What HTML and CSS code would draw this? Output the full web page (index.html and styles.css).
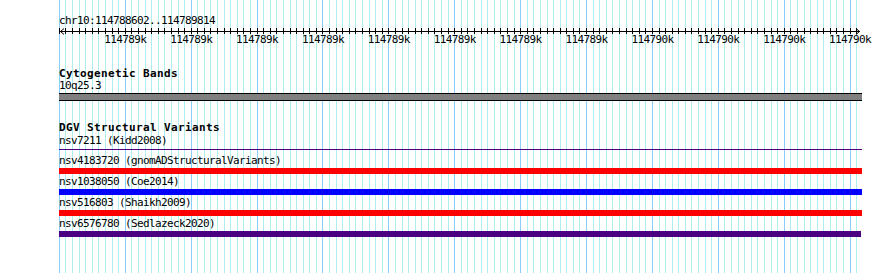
FILE: index.html
```html
<!DOCTYPE html>
<html>
<head>
<meta charset="utf-8">
<link rel="stylesheet" href="styles.css">
</head>
<body>
<div class="panel">
  <div class="ruler">
    <div class="ruler-title">chr10:114788602..114789814</div>
    <svg class="ruler-axis" width="803" height="7" viewBox="0 0 803 7" shape-rendering="crispEdges">
      <path stroke="#000" stroke-width="1" fill="none" d="M0.5 1v6M6.5 1v6M13.5 1v6M20.5 1v6M26.5 1v6M33.5 1v6M39.5 1v6M46.5 1v6M53.5 1v6M59.5 1v6M66.5 1v6M72.5 1v6M79.5 1v6M86.5 1v6M92.5 1v6M99.5 1v6M105.5 1v6M112.5 1v6M119.5 1v6M125.5 1v6M132.5 1v6M138.5 1v6M145.5 1v6M151.5 1v6M158.5 1v6M165.5 1v6M171.5 1v6M178.5 1v6M184.5 1v6M191.5 1v6M198.5 1v6M204.5 1v6M211.5 1v6M217.5 1v6M224.5 1v6M231.5 1v6M237.5 1v6M244.5 1v6M250.5 1v6M257.5 1v6M263.5 1v6M270.5 1v6M277.5 1v6M283.5 1v6M290.5 1v6M296.5 1v6M303.5 1v6M310.5 1v6M316.5 1v6M323.5 1v6M329.5 1v6M336.5 1v6M343.5 1v6M349.5 1v6M356.5 1v6M362.5 1v6M369.5 1v6M375.5 1v6M382.5 1v6M389.5 1v6M395.5 1v6M402.5 1v6M408.5 1v6M415.5 1v6M422.5 1v6M428.5 1v6M435.5 1v6M441.5 1v6M448.5 1v6M455.5 1v6M461.5 1v6M468.5 1v6M474.5 1v6M481.5 1v6M488.5 1v6M494.5 1v6M501.5 1v6M507.5 1v6M514.5 1v6M520.5 1v6M527.5 1v6M534.5 1v6M540.5 1v6M547.5 1v6M553.5 1v6M560.5 1v6M567.5 1v6M573.5 1v6M580.5 1v6M586.5 1v6M593.5 1v6M600.5 1v6M606.5 1v6M613.5 1v6M619.5 1v6M626.5 1v6M632.5 1v6M639.5 1v6M646.5 1v6M652.5 1v6M659.5 1v6M665.5 1v6M672.5 1v6M679.5 1v6M685.5 1v6M692.5 1v6M698.5 1v6M705.5 1v6M712.5 1v6M718.5 1v6M725.5 1v6M731.5 1v6M738.5 1v6M745.5 1v6M751.5 1v6M758.5 1v6M764.5 1v6M771.5 1v6M777.5 1v6M784.5 1v6M791.5 1v6M797.5 1v6"/>
      <path d="M1 4.5H801" stroke="#000" stroke-width="1" fill="none"/>
      <path d="M5 1.5L1.5 4.5L5 7.5" stroke="#000" stroke-width="1" fill="none" shape-rendering="auto"/>
      <path d="M797 1.5L800.5 4.5L797 7.5" stroke="#000" stroke-width="1" fill="none" shape-rendering="auto"/>
    </svg>
    <div class="ruler-labels">
      <span>114789k</span><span>114789k</span><span>114789k</span><span>114789k</span>
      <span>114789k</span><span>114789k</span><span>114789k</span><span>114789k</span>
      <span>114790k</span><span>114790k</span><span>114790k</span><span>114790k</span>
    </div>
  </div>

  <section class="track track-cyto">
    <div class="track-title">Cytogenetic Bands</div>
    <div class="feature-label">10q25.3</div>
    <div class="band"></div>
  </section>

  <section class="track track-dgv">
    <div class="track-title">DGV Structural Variants</div>
    <div class="feature-label first-sv">nsv7211 (Kidd2008)</div>
    <div class="sv-line"></div>
    <div class="sv-row sv-row-first">
      <div class="feature-label">nsv4183720 (gnomADStructuralVariants)</div>
      <div class="sv-bar red"></div>
    </div>
    <div class="sv-row">
      <div class="feature-label">nsv1038050 (Coe2014)</div>
      <div class="sv-bar blue"></div>
    </div>
    <div class="sv-row">
      <div class="feature-label">nsv516803 (Shaikh2009)</div>
      <div class="sv-bar red"></div>
    </div>
    <div class="sv-row">
      <div class="feature-label">nsv6576780 (Sedlazeck2020)</div>
      <div class="sv-bar purple short"></div>
    </div>
  </section>
</div>
</body>
</html>
```

FILE: styles.css
```css
html, body {
  margin: 0;
  padding: 0;
  background: #ffffff;
}

.panel {
  box-sizing: border-box;
  margin-left: 59px;
  width: 803px;
  height: 273px;
  padding-top: 15px;
  font-family: "DejaVu Sans Mono", monospace;
  font-size: 11px;
  line-height: 12px;
  letter-spacing: -0.62px;
  color: #000;
  white-space: nowrap;
  background-image:
    url("data:image/svg+xml,%3Csvg xmlns='http://www.w3.org/2000/svg' width='803' height='1' shape-rendering='crispEdges'%3E%3Cpath stroke='%2387cefa' d='M0.5 0v1M66.5 0v1M132.5 0v1M198.5 0v1M263.5 0v1M329.5 0v1M395.5 0v1M461.5 0v1M527.5 0v1M593.5 0v1M659.5 0v1M725.5 0v1M791.5 0v1'/%3E%3Cpath stroke='%23afeeee' d='M6.5 0v1M13.5 0v1M20.5 0v1M26.5 0v1M33.5 0v1M39.5 0v1M46.5 0v1M53.5 0v1M59.5 0v1M72.5 0v1M79.5 0v1M86.5 0v1M92.5 0v1M99.5 0v1M105.5 0v1M112.5 0v1M119.5 0v1M125.5 0v1M138.5 0v1M145.5 0v1M151.5 0v1M158.5 0v1M165.5 0v1M171.5 0v1M178.5 0v1M184.5 0v1M191.5 0v1M204.5 0v1M211.5 0v1M217.5 0v1M224.5 0v1M231.5 0v1M237.5 0v1M244.5 0v1M250.5 0v1M257.5 0v1M270.5 0v1M277.5 0v1M283.5 0v1M290.5 0v1M296.5 0v1M303.5 0v1M310.5 0v1M316.5 0v1M323.5 0v1M336.5 0v1M343.5 0v1M349.5 0v1M356.5 0v1M362.5 0v1M369.5 0v1M375.5 0v1M382.5 0v1M389.5 0v1M402.5 0v1M408.5 0v1M415.5 0v1M422.5 0v1M428.5 0v1M435.5 0v1M441.5 0v1M448.5 0v1M455.5 0v1M468.5 0v1M474.5 0v1M481.5 0v1M488.5 0v1M494.5 0v1M501.5 0v1M507.5 0v1M514.5 0v1M520.5 0v1M534.5 0v1M540.5 0v1M547.5 0v1M553.5 0v1M560.5 0v1M567.5 0v1M573.5 0v1M580.5 0v1M586.5 0v1M600.5 0v1M606.5 0v1M613.5 0v1M619.5 0v1M626.5 0v1M632.5 0v1M639.5 0v1M646.5 0v1M652.5 0v1M665.5 0v1M672.5 0v1M679.5 0v1M685.5 0v1M692.5 0v1M698.5 0v1M705.5 0v1M712.5 0v1M718.5 0v1M731.5 0v1M738.5 0v1M745.5 0v1M751.5 0v1M758.5 0v1M764.5 0v1M771.5 0v1M777.5 0v1M784.5 0v1M797.5 0v1'/%3E%3C/svg%3E");
  background-repeat: repeat-y;
  background-position: 0 0;
}

.ruler-title {
  height: 12px;
}

.ruler-axis {
  display: block;
  overflow: visible;
}

.ruler-labels {
  display: flex;
  padding-left: 33.35px;
  height: 12px;
}

.ruler-labels span {
  flex: 0 0 65.9px;
  text-align: center;
}

.track-title {
  font-weight: bold;
  letter-spacing: 0.38px;
}

.track-cyto {
  margin-top: 22px;
}

.band {
  margin-top: 1px;
  height: 6px;
  border-top: 1px solid #000;
  border-bottom: 1px solid #000;
  background: #808080;
}

.track-dgv {
  margin-top: 21px;
}

.first-sv {
  margin-top: 1px;
}

.sv-line {
  margin-top: 2px;
  height: 1px;
  background: #4b0082;
}

.sv-row {
  margin-top: 2px;
}

.sv-row.sv-row-first {
  margin-top: 5px;
}

.sv-bar {
  margin-top: 1px;
  height: 6px;
}

.sv-bar.red { background: #ff0000; }
.sv-bar.blue { background: #0000ff; }
.sv-bar.purple { background: #4b0082; }
.sv-bar.short { width: 802px; }
```
